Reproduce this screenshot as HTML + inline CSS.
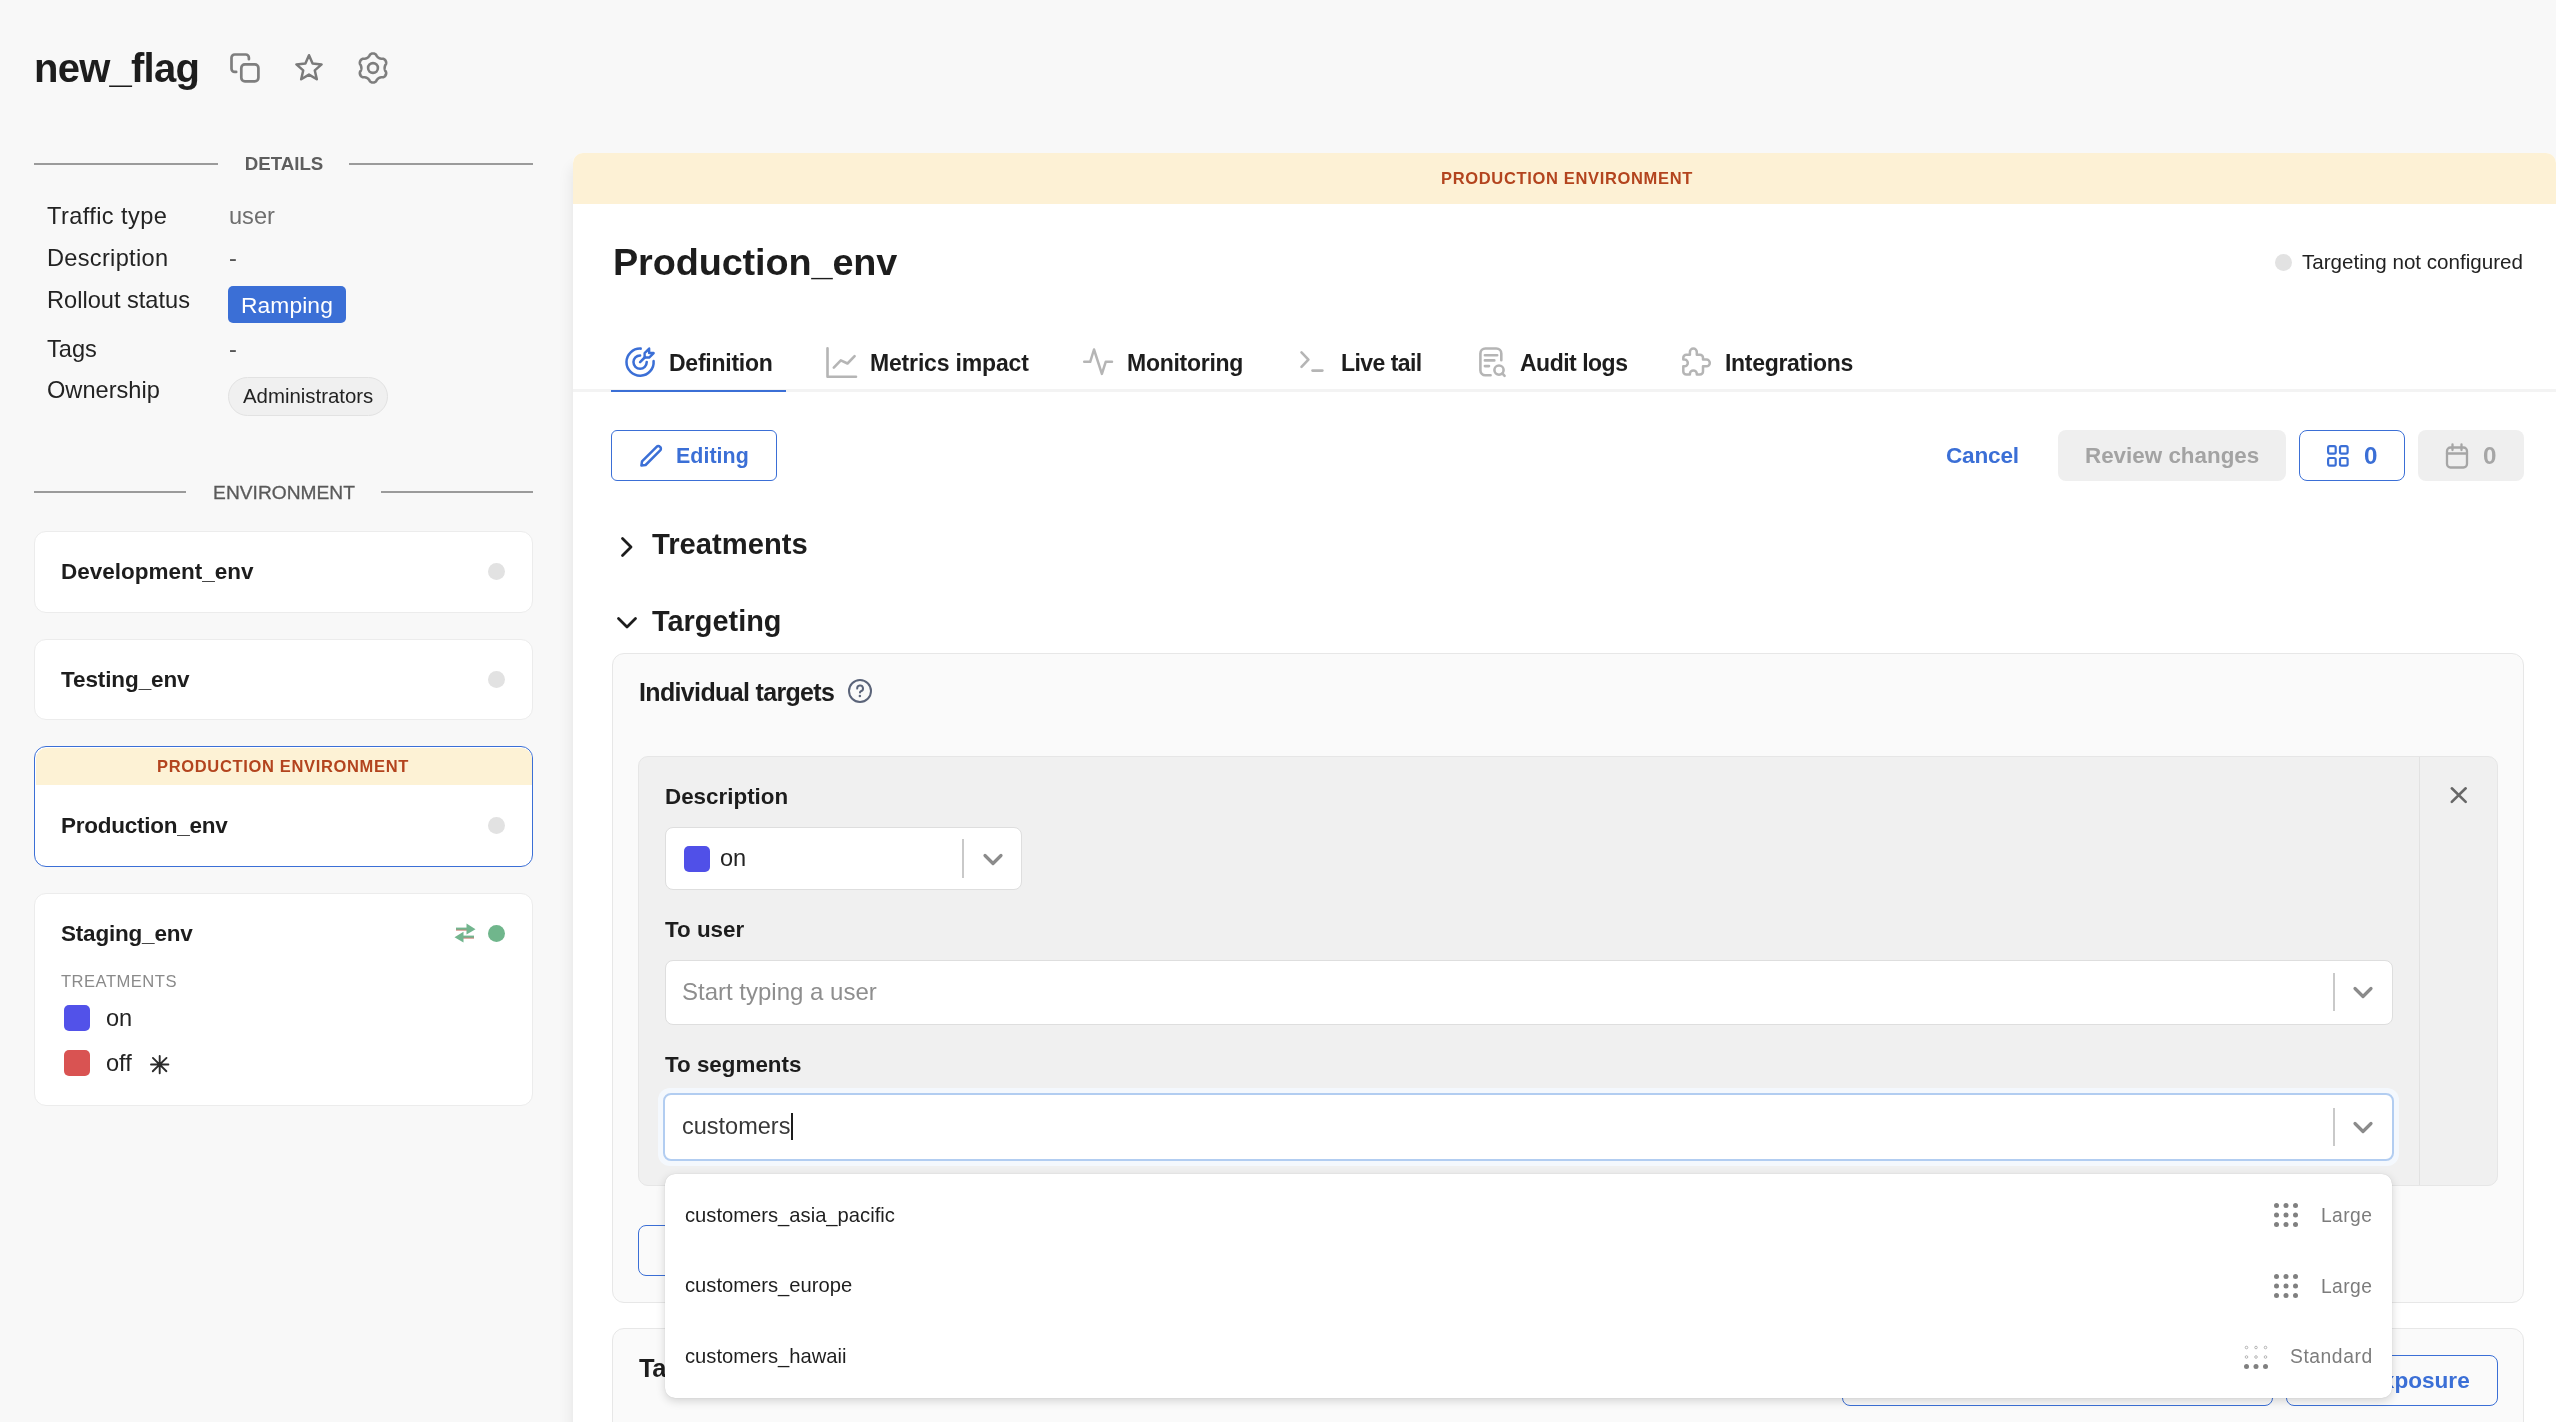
<!DOCTYPE html>
<html><head><meta charset="utf-8"><title>new_flag</title>
<style>
html,body{margin:0;padding:0;}
body{width:2556px;height:1422px;overflow:hidden;position:relative;background:#f8f8f8;font-family:"Liberation Sans",sans-serif;}
.t{position:absolute;line-height:1;white-space:nowrap;will-change:transform;}
.b{position:absolute;}
</style></head><body>
<div class="t" style="top:47.73px;font-size:40px;font-weight:700;color:#1d1d1d;letter-spacing:-0.75px;left:33.80px;">new_flag</div>
<svg class="b" style="left:226.00px;top:49.00px;width:36.00px;height:36.00px;" viewBox="0 0 36 36" fill="none"><rect x="15.3" y="15.3" width="17.1" height="17" rx="3.6" stroke="#7e7e7e" stroke-width="2.7"/><path d="M10.2 22.9 H8.7 A3.2 3.2 0 0 1 5.5 19.7 V8.7 A3.2 3.2 0 0 1 8.7 5.5 H19.7 A3.2 3.2 0 0 1 22.9 8.7 V10.2" stroke="#7e7e7e" stroke-width="2.7" stroke-linecap="round"/></svg>
<svg class="b" style="left:293.00px;top:52.00px;width:32.00px;height:32.00px;" viewBox="0 0 32 32" fill="none"><path d="M16 3.2 L19.6 11.6 L28.6 12.4 L21.8 18.4 L23.8 27.3 L16 22.6 L8.2 27.3 L10.2 18.4 L3.4 12.4 L12.4 11.6 Z" stroke="#7a7a7a" stroke-width="2.5" stroke-linejoin="round"/></svg>
<svg class="b" style="left:355.90px;top:50.80px;width:34.00px;height:34.00px;" viewBox="0 0 34 34" fill="none"><path d="M28.65 17.00 L28.66 16.69 L28.68 16.39 L28.73 16.08 L28.79 15.76 L28.86 15.44 L28.95 15.11 L29.06 14.76 L29.19 14.41 L29.35 14.03 L29.65 13.61 L29.94 13.17 L30.06 12.75 L30.14 12.35 L30.16 11.95 L30.15 11.55 L30.11 11.16 L30.03 10.78 L29.92 10.42 L29.78 10.06 L29.60 9.73 L29.40 9.40 L29.16 9.10 L28.90 8.82 L28.61 8.57 L28.30 8.33 L27.96 8.13 L27.60 7.95 L27.21 7.81 L26.79 7.71 L26.26 7.74 L25.75 7.78 L25.34 7.74 L24.97 7.67 L24.62 7.60 L24.28 7.51 L23.97 7.41 L23.66 7.31 L23.37 7.19 L23.09 7.06 L22.83 6.91 L22.56 6.75 L22.31 6.58 L22.06 6.38 L21.82 6.17 L21.58 5.95 L21.34 5.70 L21.09 5.44 L20.85 5.15 L20.61 4.82 L20.39 4.35 L20.15 3.88 L19.86 3.56 L19.54 3.30 L19.21 3.07 L18.86 2.88 L18.50 2.73 L18.13 2.61 L17.76 2.52 L17.38 2.47 L17.00 2.45 L16.62 2.47 L16.24 2.52 L15.87 2.61 L15.50 2.73 L15.14 2.88 L14.79 3.07 L14.46 3.30 L14.14 3.56 L13.85 3.88 L13.61 4.35 L13.39 4.82 L13.15 5.15 L12.91 5.44 L12.66 5.70 L12.42 5.95 L12.18 6.17 L11.94 6.38 L11.69 6.58 L11.44 6.75 L11.18 6.91 L10.91 7.06 L10.63 7.19 L10.34 7.31 L10.03 7.41 L9.72 7.51 L9.38 7.60 L9.03 7.67 L8.66 7.74 L8.25 7.78 L7.74 7.74 L7.21 7.71 L6.79 7.81 L6.40 7.95 L6.04 8.13 L5.70 8.33 L5.39 8.57 L5.10 8.82 L4.84 9.10 L4.60 9.40 L4.40 9.73 L4.22 10.06 L4.08 10.42 L3.97 10.78 L3.89 11.16 L3.85 11.55 L3.84 11.95 L3.86 12.35 L3.94 12.75 L4.06 13.17 L4.35 13.61 L4.65 14.03 L4.81 14.41 L4.94 14.76 L5.05 15.11 L5.14 15.44 L5.21 15.76 L5.27 16.08 L5.32 16.39 L5.34 16.69 L5.35 17.00 L5.34 17.31 L5.32 17.61 L5.27 17.92 L5.21 18.24 L5.14 18.56 L5.05 18.89 L4.94 19.24 L4.81 19.59 L4.65 19.97 L4.35 20.39 L4.06 20.83 L3.94 21.25 L3.86 21.65 L3.84 22.05 L3.85 22.45 L3.89 22.84 L3.97 23.22 L4.08 23.58 L4.22 23.94 L4.40 24.27 L4.60 24.60 L4.84 24.90 L5.10 25.18 L5.39 25.43 L5.70 25.67 L6.04 25.87 L6.40 26.05 L6.79 26.19 L7.21 26.29 L7.74 26.26 L8.25 26.22 L8.66 26.26 L9.03 26.33 L9.38 26.40 L9.72 26.49 L10.03 26.59 L10.34 26.69 L10.63 26.81 L10.91 26.94 L11.17 27.09 L11.44 27.25 L11.69 27.42 L11.94 27.62 L12.18 27.83 L12.42 28.05 L12.66 28.30 L12.91 28.56 L13.15 28.85 L13.39 29.18 L13.61 29.65 L13.85 30.12 L14.14 30.44 L14.46 30.70 L14.79 30.93 L15.14 31.12 L15.50 31.27 L15.87 31.39 L16.24 31.48 L16.62 31.53 L17.00 31.55 L17.38 31.53 L17.76 31.48 L18.13 31.39 L18.50 31.27 L18.86 31.12 L19.21 30.93 L19.54 30.70 L19.86 30.44 L20.15 30.12 L20.39 29.65 L20.61 29.18 L20.85 28.85 L21.09 28.56 L21.34 28.30 L21.58 28.05 L21.82 27.83 L22.06 27.62 L22.31 27.42 L22.56 27.25 L22.83 27.09 L23.09 26.94 L23.37 26.81 L23.66 26.69 L23.97 26.59 L24.28 26.49 L24.62 26.40 L24.97 26.33 L25.34 26.26 L25.75 26.22 L26.26 26.26 L26.79 26.29 L27.21 26.19 L27.60 26.05 L27.96 25.87 L28.30 25.67 L28.61 25.43 L28.90 25.18 L29.16 24.90 L29.40 24.60 L29.60 24.27 L29.78 23.94 L29.92 23.58 L30.03 23.22 L30.11 22.84 L30.15 22.45 L30.16 22.05 L30.14 21.65 L30.06 21.25 L29.94 20.83 L29.65 20.39 L29.35 19.97 L29.19 19.59 L29.06 19.24 L28.95 18.89 L28.86 18.56 L28.79 18.24 L28.73 17.92 L28.68 17.61 L28.66 17.31 L28.65 17.00Z" stroke="#7e7e7e" stroke-width="2.6" stroke-linejoin="round"/><circle cx="17" cy="17" r="4.9" stroke="#7e7e7e" stroke-width="2.6"/></svg>
<div class="b" style="left:34.00px;top:163.00px;width:184.00px;height:2.00px;background:#9b9b9b;"></div>
<div class="b" style="left:349.00px;top:163.00px;width:184.00px;height:2.00px;background:#9b9b9b;"></div>
<div class="t" style="top:155.47px;font-size:18.7px;font-weight:700;color:#5e5e5e;left:-716.50px;width:2000px;text-align:center;">DETAILS</div>
<div class="t" style="top:205.12px;font-size:23.6px;font-weight:400;color:#232323;letter-spacing:0.4px;left:46.60px;">Traffic type</div>
<div class="t" style="top:205.12px;font-size:23.6px;font-weight:400;color:#6e6e6e;left:228.70px;">user</div>
<div class="t" style="top:247.42px;font-size:23.6px;font-weight:400;color:#232323;letter-spacing:0.3px;left:47.20px;">Description</div>
<div class="t" style="top:247.42px;font-size:23.6px;font-weight:400;color:#555;left:228.60px;">-</div>
<div class="t" style="top:289.02px;font-size:23.6px;font-weight:400;color:#232323;left:47.20px;">Rollout status</div>
<div class="b" style="left:228.00px;top:286.00px;width:118.00px;height:37.00px;background:#3b6fd6;border-radius:5px;"></div>
<div class="t" style="top:294.00px;font-size:22.8px;font-weight:400;color:#fff;letter-spacing:0.1px;left:240.80px;">Ramping</div>
<div class="t" style="top:337.62px;font-size:23.6px;font-weight:400;color:#232323;left:47.00px;">Tags</div>
<div class="t" style="top:337.62px;font-size:23.6px;font-weight:400;color:#555;left:228.60px;">-</div>
<div class="t" style="top:379.42px;font-size:23.6px;font-weight:400;color:#232323;left:46.50px;">Ownership</div>
<div class="b" style="left:228.00px;top:377.00px;width:160.00px;height:39.00px;background:#f0f0f0;border:1.5px solid #e2e2e2;border-radius:20px;box-sizing:border-box;"></div>
<div class="t" style="top:385.73px;font-size:20.4px;font-weight:400;color:#232323;left:243.00px;">Administrators</div>
<div class="b" style="left:34.00px;top:491.00px;width:152.00px;height:2.00px;background:#9b9b9b;"></div>
<div class="b" style="left:381.00px;top:491.00px;width:152.00px;height:2.00px;background:#9b9b9b;"></div>
<div class="t" style="top:482.94px;font-size:19.2px;font-weight:400;color:#5a5a5a;left:-716.50px;width:2000px;text-align:center;-webkit-text-stroke:0.3px #5a5a5a;">ENVIRONMENT</div>
<div class="b" style="left:34.00px;top:530.50px;width:499.00px;height:82.00px;background:#fff;border:1.5px solid #ececec;border-radius:12px;box-sizing:border-box;"></div>
<div class="t" style="top:561.25px;font-size:22.5px;font-weight:700;color:#1d1d1d;left:60.60px;">Development_env</div>
<div class="b" style="left:488.10px;top:563.30px;width:17.00px;height:17.00px;background:#e2e2e2;border-radius:50%;"></div>
<div class="b" style="left:34.00px;top:638.50px;width:499.00px;height:81.00px;background:#fff;border:1.5px solid #ececec;border-radius:12px;box-sizing:border-box;"></div>
<div class="t" style="top:668.95px;font-size:22.5px;font-weight:700;color:#1d1d1d;letter-spacing:-0.1px;left:61.20px;">Testing_env</div>
<div class="b" style="left:488.10px;top:671.00px;width:17.00px;height:17.00px;background:#e2e2e2;border-radius:50%;"></div>
<div class="b" style="left:34.00px;top:746.00px;width:499.00px;height:121.00px;background:#fff;border:1.5px solid #3b6fd6;border-radius:12px;box-sizing:border-box;overflow:hidden;"></div>
<div class="b" style="left:35.50px;top:747.50px;width:496.00px;height:37.50px;background:#fdf2d5;border-radius:11px 11px 0 0;"></div>
<div class="t" style="top:758.33px;font-size:16.5px;font-weight:700;color:#b3441e;letter-spacing:0.66px;left:-716.70px;width:2000px;text-align:center;">PRODUCTION ENVIRONMENT</div>
<div class="t" style="top:814.95px;font-size:22.5px;font-weight:700;color:#1d1d1d;letter-spacing:-0.25px;left:60.50px;">Production_env</div>
<div class="b" style="left:488.10px;top:817.00px;width:17.00px;height:17.00px;background:#e2e2e2;border-radius:50%;"></div>
<div class="b" style="left:34.00px;top:892.50px;width:499.00px;height:213.00px;background:#fff;border:1.5px solid #ececec;border-radius:12px;box-sizing:border-box;"></div>
<div class="t" style="top:923.25px;font-size:22.5px;font-weight:700;color:#1d1d1d;letter-spacing:-0.2px;left:61.00px;">Staging_env</div>
<svg class="b" style="left:453.00px;top:922.00px;width:24.00px;height:22.00px;" viewBox="0 0 24 22" fill="none"><rect x="3" y="5.6" width="11" height="2.6" fill="#72b58e"/><rect x="3" y="7.7" width="11" height="0.8" fill="#d9706a"/><path d="M13.5 1.5 L22.5 7.2 L13.5 12.5 Z" fill="#72b58e"/><rect x="10" y="13.6" width="11" height="2.6" fill="#72b58e"/><rect x="10" y="15.7" width="11" height="0.8" fill="#d9706a"/><path d="M10.5 9.8 L1.5 15.2 L10.5 20.5 Z" fill="#72b58e"/></svg>
<div class="b" style="left:487.85px;top:924.75px;width:17.50px;height:17.50px;background:#70b68c;border-radius:50%;"></div>
<div class="t" style="top:974.14px;font-size:16.6px;font-weight:400;color:#8a8a8a;letter-spacing:0.47px;left:61.20px;">TREATMENTS</div>
<div class="b" style="left:63.70px;top:1004.70px;width:26.50px;height:26.60px;background:#5252e9;border-radius:5px;"></div>
<div class="t" style="top:1006.82px;font-size:23.6px;font-weight:400;color:#232323;left:106.20px;">on</div>
<div class="b" style="left:63.70px;top:1049.70px;width:26.50px;height:26.50px;background:#d95352;border-radius:5px;"></div>
<div class="t" style="top:1052.32px;font-size:23.6px;font-weight:400;color:#232323;left:106.20px;">off</div>
<svg class="b" style="left:149.00px;top:1054.00px;width:22.00px;height:22.00px;" viewBox="0 0 22 22" fill="none"><path d="M10.7 1.9 V19.2 M2.0 10.5 H19.4 M3.9 3.9 L17.4 17.2 M17.5 3.9 L3.8 17.3" stroke="#2b2b2b" stroke-width="1.9" stroke-linecap="round"/></svg>
<div class="b" style="left:572.50px;top:153.00px;width:1983.50px;height:1347.00px;background:#fff;border-radius:10px 10px 0 0;box-shadow:-5px 10px 14px -3px rgba(0,0,0,0.075);"></div>
<div class="b" style="left:572.50px;top:153.00px;width:1983.50px;height:51.00px;background:#fdf1d5;border-radius:10px 10px 0 0;"></div>
<div class="t" style="top:170.03px;font-size:16.5px;font-weight:700;color:#b3441e;letter-spacing:0.66px;left:567.00px;width:2000px;text-align:center;">PRODUCTION ENVIRONMENT</div>
<div class="t" style="top:244.19px;font-size:37.8px;font-weight:700;color:#1d1d1d;letter-spacing:-0.1px;left:612.50px;">Production_env</div>
<div class="b" style="left:2275.00px;top:254.00px;width:17.00px;height:17.00px;background:#e2e2e2;border-radius:50%;"></div>
<div class="t" style="top:251.56px;font-size:20.6px;font-weight:400;color:#222;right:33.00px;">Targeting not configured</div>
<div class="b" style="left:572.50px;top:389.00px;width:1983.50px;height:2.50px;background:#f3f3f3;"></div>
<div class="b" style="left:610.80px;top:390.00px;width:175.20px;height:2.00px;background:#3b6fd6;"></div>
<div class="t" style="top:351.93px;font-size:23.0px;font-weight:700;color:#1d1d1d;letter-spacing:-0.25px;left:668.80px;">Definition</div>
<div class="t" style="top:351.93px;font-size:23.0px;font-weight:700;color:#1d1d1d;letter-spacing:-0.17px;left:869.80px;">Metrics impact</div>
<div class="t" style="top:351.93px;font-size:23.0px;font-weight:700;color:#1d1d1d;letter-spacing:-0.27px;left:1127.20px;">Monitoring</div>
<div class="t" style="top:351.93px;font-size:23.0px;font-weight:700;color:#1d1d1d;letter-spacing:-0.55px;left:1340.60px;">Live tail</div>
<div class="t" style="top:351.93px;font-size:23.0px;font-weight:700;color:#1d1d1d;letter-spacing:-0.5px;left:1520.00px;">Audit logs</div>
<div class="t" style="top:351.93px;font-size:23.0px;font-weight:700;color:#1d1d1d;letter-spacing:-0.3px;left:1724.80px;">Integrations</div>
<svg class="b" style="left:622.10px;top:343.70px;width:36.20px;height:36.20px;" viewBox="0 0 24 24" fill="none"><path d="M12.4 3.06 A9 9 0 1 0 20.94 11.3" stroke="#3b6fd6" stroke-width="1.68" stroke-linecap="round"/><path d="M12 7.6 A4.4 4.4 0 1 0 16.4 12" stroke="#3b6fd6" stroke-width="1.68" stroke-linecap="round"/><path d="M15.2 8.8 L12 12" stroke="#3b6fd6" stroke-width="1.68" stroke-linecap="round"/><path d="M15 6 V9 H18 L21 6 H18 V3 Z" stroke="#3b6fd6" stroke-width="1.6" stroke-linejoin="round"/></svg>
<svg class="b" style="left:822.00px;top:344.00px;width:40.00px;height:36.00px;" viewBox="0 0 40 36" fill="none"><path d="M5.5 4.2 V32.8 H34" stroke="#b5b5b5" stroke-width="2.6" stroke-linecap="round" stroke-linejoin="round"/><path d="M11.8 23.6 L18.8 16.3 L25.5 19.5 L32.6 12.2" stroke="#b5b5b5" stroke-width="2.6" stroke-linecap="round" stroke-linejoin="round"/></svg>
<svg class="b" style="left:1080.00px;top:345.00px;width:34.00px;height:32.00px;" viewBox="0 0 34 32" fill="none"><path d="M4.2 16.8 H10.2 L14 4.5 L21.9 28.9 L25.7 16.8 H32" stroke="#b5b5b5" stroke-width="2.5" stroke-linecap="round" stroke-linejoin="round"/></svg>
<svg class="b" style="left:1298.00px;top:349.00px;width:29.00px;height:26.00px;" viewBox="0 0 29 26" fill="none"><path d="M3.5 3.4 L10.4 10.6 L3.5 17.8" stroke="#b5b5b5" stroke-width="2.6" stroke-linecap="round" stroke-linejoin="round"/><path d="M14.5 21.6 H24.4" stroke="#b5b5b5" stroke-width="2.6" stroke-linecap="round"/></svg>
<svg class="b" style="left:1476.00px;top:343.00px;width:32.00px;height:36.00px;" viewBox="0 0 32 36" fill="none"><path d="M14.6 32.3 H9.4 A5 5 0 0 1 4.4 27.3 V10.5 A5 5 0 0 1 9.4 5.5 H20.3 A5 5 0 0 1 25.3 10.5 V17.3" stroke="#b5b5b5" stroke-width="2.6" stroke-linecap="round"/><path d="M8.9 12.3 H21.2 M8.9 17.4 H18.3 M8.9 23.1 H13" stroke="#b5b5b5" stroke-width="2.6" stroke-linecap="round"/><circle cx="23" cy="27.1" r="4.6" stroke="#b5b5b5" stroke-width="2.6"/><path d="M26.3 30.4 L28.6 32.8" stroke="#b5b5b5" stroke-width="2.6" stroke-linecap="round"/></svg>
<svg class="b" style="left:1676.00px;top:342.00px;width:36.00px;height:36.00px;" viewBox="0 0 36 36" fill="none"><path d="M10.3 12.8 H13.9 V9.95 A3.45 3.45 0 0 1 20.8 9.95 V12.8 H24 A3 3 0 0 1 27 15.8 V17.6 H30.45 A3.35 3.35 0 0 1 30.45 24.3 H27 V29.6 A3 3 0 0 1 24 32.6 H20.8 V31.85 A3.45 3.45 0 0 0 13.9 31.85 V32.6 H10.3 A3 3 0 0 1 7.3 29.6 V24.3 H8.45 A3.35 3.35 0 0 0 8.45 17.6 H7.3 V15.8 A3 3 0 0 1 10.3 12.8 Z" stroke="#b5b5b5" stroke-width="2.5" stroke-linejoin="round"/></svg>
<div class="b" style="left:611.00px;top:430.00px;width:166.00px;height:51.00px;border:1.3px solid #3b6fd6;border-radius:6px;box-sizing:border-box;"></div>
<svg class="b" style="left:637.00px;top:442.00px;width:28.00px;height:28.00px;" viewBox="0 0 28 28" fill="none"><path d="M4.4 23.6 L5 19.4 L19.6 4.8 A2.4 2.4 0 0 1 23 4.8 L23.2 5 A2.4 2.4 0 0 1 23.2 8.4 L8.6 23 Z" stroke="#3b6fd6" stroke-width="2.5" stroke-linejoin="round"/></svg>
<div class="t" style="top:445.68px;font-size:21.4px;font-weight:700;color:#3b6fd6;letter-spacing:0.05px;left:676.20px;">Editing</div>
<div class="t" style="top:445.26px;font-size:22.6px;font-weight:700;color:#3b6fd6;letter-spacing:-0.2px;left:1945.50px;">Cancel</div>
<div class="b" style="left:2058.00px;top:430.00px;width:228.00px;height:51.00px;background:#efefef;border-radius:8px;"></div>
<div class="t" style="top:445.43px;font-size:22.4px;font-weight:700;color:#a3a3a3;left:2085.00px;">Review changes</div>
<div class="b" style="left:2299.00px;top:430.00px;width:106.00px;height:51.00px;border:1.3px solid #3b6fd6;border-radius:8px;box-sizing:border-box;"></div>
<svg class="b" style="left:2325.00px;top:443.00px;width:26.00px;height:26.00px;" viewBox="0 0 26 26" fill="none"><rect x="3.1" y="3.1" width="7.6" height="7.6" rx="1.6" stroke="#3b6fd6" stroke-width="2.2"/><rect x="3.1" y="15.0" width="7.6" height="7.6" rx="1.6" stroke="#3b6fd6" stroke-width="2.2"/><rect x="15.0" y="3.1" width="7.6" height="7.6" rx="1.6" stroke="#3b6fd6" stroke-width="2.2"/><rect x="15.0" y="15.0" width="7.6" height="7.6" rx="1.6" stroke="#3b6fd6" stroke-width="2.2"/></svg>
<div class="t" style="top:444.11px;font-size:24.2px;font-weight:700;color:#3b6fd6;left:2364.00px;">0</div>
<div class="b" style="left:2418.00px;top:430.00px;width:106.00px;height:51.00px;background:#efefef;border-radius:8px;"></div>
<svg class="b" style="left:2444.00px;top:442.00px;width:26.00px;height:28.00px;" viewBox="0 0 26 28" fill="none"><rect x="3" y="5.5" width="20" height="20" rx="3.5" stroke="#a6a6a6" stroke-width="2.3"/><path d="M3 11.5 H23 M8.5 2.5 V8 M17.5 2.5 V8" stroke="#a6a6a6" stroke-width="2.3" stroke-linecap="round"/></svg>
<div class="t" style="top:444.11px;font-size:24.2px;font-weight:700;color:#a6a6a6;left:2482.60px;">0</div>
<svg class="b" style="left:618.00px;top:535.00px;width:18.00px;height:24.00px;" viewBox="0 0 18 24" fill="none"><path d="M4.5 3.5 L13 12 L4.5 20.5" stroke="#1d1d1d" stroke-width="2.8" stroke-linecap="round" stroke-linejoin="round"/></svg>
<div class="t" style="top:530.28px;font-size:29.2px;font-weight:700;color:#1d1d1d;left:651.70px;">Treatments</div>
<svg class="b" style="left:614.00px;top:612.00px;width:26.00px;height:22.00px;" viewBox="0 0 26 22" fill="none"><path d="M4.5 6.5 L13 15 L21.5 6.5" stroke="#1d1d1d" stroke-width="2.8" stroke-linecap="round" stroke-linejoin="round"/></svg>
<div class="t" style="top:606.63px;font-size:28.9px;font-weight:700;color:#1d1d1d;left:651.70px;">Targeting</div>
<div class="b" style="left:611.50px;top:652.50px;width:1912.50px;height:650.50px;background:#fafafa;border:1.5px solid #e7e7e7;border-radius:12px;box-sizing:border-box;"></div>
<div class="t" style="top:679.63px;font-size:25.0px;font-weight:700;color:#1d1d1d;letter-spacing:-0.65px;left:638.70px;">Individual targets</div>
<svg class="b" style="left:847.00px;top:678.00px;width:26.00px;height:26.00px;" viewBox="0 0 26 26" fill="none"><circle cx="13" cy="13" r="11" stroke="#5b6479" stroke-width="2"/><path d="M10.2 10.6 A2.9 2.9 0 1 1 14 13.2 C13.4 13.6 13 13.9 13 14.6" stroke="#5b6479" stroke-width="2" stroke-linecap="round"/><circle cx="12.9" cy="17.9" r="1.25" fill="#5b6479"/></svg>
<div class="b" style="left:638.20px;top:756.00px;width:1859.80px;height:430.00px;background:#f0f0f0;border:1.5px solid #e6e6e6;border-radius:10px;box-sizing:border-box;"></div>
<div class="b" style="left:2419.00px;top:757.00px;width:1.30px;height:428.00px;background:#e2e2e2;"></div>
<svg class="b" style="left:2446.00px;top:783.00px;width:25.00px;height:24.00px;" viewBox="0 0 25 24" fill="none"><path d="M5.8 5.3 L19.7 18.9 M19.7 5.3 L5.8 18.9" stroke="#676767" stroke-width="2.6" stroke-linecap="round"/></svg>
<div class="t" style="top:786.13px;font-size:22.4px;font-weight:700;color:#1d1d1d;left:665.10px;">Description</div>
<div class="b" style="left:664.50px;top:826.50px;width:357.70px;height:63.00px;background:#fff;border:1.5px solid #dedede;border-radius:8px;box-sizing:border-box;"></div>
<div class="b" style="left:683.70px;top:845.90px;width:26.60px;height:26.30px;background:#5050e8;border-radius:5px;"></div>
<div class="t" style="top:846.92px;font-size:23.6px;font-weight:400;color:#232323;left:720.40px;">on</div>
<div class="b" style="left:962.00px;top:839.00px;width:2.00px;height:38.50px;background:#c9c9c9;"></div>
<svg class="b" style="left:980.00px;top:850.00px;width:26.00px;height:20.00px;" viewBox="0 0 26 20" fill="none"><path d="M5 5.5 L13 13.5 L21 5.5" stroke="#8b8b8b" stroke-width="3.2" stroke-linecap="round" stroke-linejoin="round"/></svg>
<div class="t" style="top:918.73px;font-size:22.4px;font-weight:700;color:#1d1d1d;left:665.10px;">To user</div>
<div class="b" style="left:664.50px;top:959.50px;width:1728.00px;height:65.00px;background:#fff;border:1.5px solid #dedede;border-radius:8px;box-sizing:border-box;"></div>
<div class="t" style="top:979.58px;font-size:24.0px;font-weight:400;color:#8e8e8e;left:682.00px;">Start typing a user</div>
<div class="b" style="left:2333.00px;top:973.00px;width:2.00px;height:38.00px;background:#c9c9c9;"></div>
<svg class="b" style="left:2350.00px;top:982.50px;width:26.00px;height:20.00px;" viewBox="0 0 26 20" fill="none"><path d="M5 5.5 L13 13.5 L21 5.5" stroke="#8b8b8b" stroke-width="3.2" stroke-linecap="round" stroke-linejoin="round"/></svg>
<div class="t" style="top:1053.93px;font-size:22.4px;font-weight:700;color:#1d1d1d;left:665.10px;">To segments</div>
<div class="b" style="left:658.00px;top:1088.00px;width:1741.00px;height:78.00px;background:#f4f8fd;border-radius:12px;"></div>
<div class="b" style="left:662.80px;top:1092.80px;width:1731.20px;height:68.20px;background:#fff;border:2px solid #b2cdf1;border-radius:8px;box-sizing:border-box;"></div>
<div class="t" style="top:1115.10px;font-size:23.5px;font-weight:400;color:#383838;left:682.10px;">customers</div>
<div class="b" style="left:791.00px;top:1113.00px;width:2.00px;height:27.00px;background:#1d1d1d;"></div>
<div class="b" style="left:2333.00px;top:1108.00px;width:2.00px;height:38.00px;background:#c9c9c9;"></div>
<svg class="b" style="left:2350.00px;top:1117.80px;width:26.00px;height:20.00px;" viewBox="0 0 26 20" fill="none"><path d="M5 5.5 L13 13.5 L21 5.5" stroke="#8b8b8b" stroke-width="3.2" stroke-linecap="round" stroke-linejoin="round"/></svg>
<div class="b" style="left:638.30px;top:1225.00px;width:561.70px;height:51.00px;border:1.3px solid #3b6fd6;border-radius:8px;box-sizing:border-box;"></div>
<div class="b" style="left:611.50px;top:1328.30px;width:1912.50px;height:171.70px;background:#fafafa;border:1.5px solid #e7e7e7;border-radius:12px;box-sizing:border-box;"></div>
<div class="t" style="top:1355.81px;font-size:25.5px;font-weight:700;color:#1d1d1d;letter-spacing:-0.5px;left:638.60px;">Targeting rules</div>
<div class="b" style="left:1842.00px;top:1355.00px;width:430.50px;height:50.50px;border:1.3px solid #3b6fd6;border-radius:8px;box-sizing:border-box;"></div>
<div class="b" style="left:2286.00px;top:1355.00px;width:212.00px;height:50.50px;border:1.3px solid #3b6fd6;border-radius:8px;box-sizing:border-box;"></div>
<div class="t" style="top:1369.86px;font-size:22.6px;font-weight:700;color:#3b6fd6;right:86.00px;">Limit exposure</div>
<div class="b" style="left:664.50px;top:1173.50px;width:1727.80px;height:224.20px;background:#fff;border-radius:10px;box-shadow:0 3px 10px rgba(0,0,0,0.16),0 0 1px rgba(0,0,0,0.2);"></div>
<div class="t" style="top:1204.90px;font-size:20.2px;font-weight:400;color:#1f1f1f;left:684.90px;">customers_asia_pacific</div>
<div class="t" style="top:1275.20px;font-size:20.2px;font-weight:400;color:#1f1f1f;left:684.90px;">customers_europe</div>
<div class="t" style="top:1345.90px;font-size:20.2px;font-weight:400;color:#1f1f1f;left:684.90px;">customers_hawaii</div>
<svg class="b" style="left:2274.00px;top:1203.20px;width:24.00px;height:24.00px;" viewBox="0 0 24 24" fill="none"><circle cx="2.5" cy="2.5" r="2.5" fill="#808080"/><circle cx="12.0" cy="2.5" r="2.5" fill="#808080"/><circle cx="21.5" cy="2.5" r="2.5" fill="#808080"/><circle cx="2.5" cy="12.0" r="2.5" fill="#808080"/><circle cx="12.0" cy="12.0" r="2.5" fill="#808080"/><circle cx="21.5" cy="12.0" r="2.5" fill="#808080"/><circle cx="2.5" cy="21.5" r="2.5" fill="#808080"/><circle cx="12.0" cy="21.5" r="2.5" fill="#808080"/><circle cx="21.5" cy="21.5" r="2.5" fill="#808080"/></svg>
<div class="t" style="top:1206.26px;font-size:19.3px;font-weight:400;color:#7c7c7c;letter-spacing:0.4px;right:183.60px;margin-right:-0.4px;">Large</div>
<svg class="b" style="left:2274.00px;top:1274.00px;width:24.00px;height:24.00px;" viewBox="0 0 24 24" fill="none"><circle cx="2.5" cy="2.5" r="2.5" fill="#808080"/><circle cx="12.0" cy="2.5" r="2.5" fill="#808080"/><circle cx="21.5" cy="2.5" r="2.5" fill="#808080"/><circle cx="2.5" cy="12.0" r="2.5" fill="#808080"/><circle cx="12.0" cy="12.0" r="2.5" fill="#808080"/><circle cx="21.5" cy="12.0" r="2.5" fill="#808080"/><circle cx="2.5" cy="21.5" r="2.5" fill="#808080"/><circle cx="12.0" cy="21.5" r="2.5" fill="#808080"/><circle cx="21.5" cy="21.5" r="2.5" fill="#808080"/></svg>
<div class="t" style="top:1276.66px;font-size:19.3px;font-weight:400;color:#7c7c7c;letter-spacing:0.4px;right:183.60px;margin-right:-0.4px;">Large</div>
<svg class="b" style="left:2244.00px;top:1345.00px;width:24.00px;height:24.00px;" viewBox="0 0 24 24" fill="none"><circle cx="2.5" cy="2.5" r="1.3" stroke="#9a9a9a" stroke-width="0.7"/><circle cx="12.0" cy="2.5" r="1.3" stroke="#9a9a9a" stroke-width="0.7"/><circle cx="21.5" cy="2.5" r="1.3" stroke="#9a9a9a" stroke-width="0.7"/><circle cx="2.5" cy="12.0" r="1.3" stroke="#9a9a9a" stroke-width="0.7"/><circle cx="12.0" cy="12.0" r="1.3" stroke="#9a9a9a" stroke-width="0.7"/><circle cx="21.5" cy="12.0" r="1.3" stroke="#9a9a9a" stroke-width="0.7"/><circle cx="2.5" cy="21.5" r="2.5" fill="#808080"/><circle cx="12.0" cy="21.5" r="2.5" fill="#808080"/><circle cx="21.5" cy="21.5" r="2.5" fill="#808080"/></svg>
<div class="t" style="top:1347.26px;font-size:19.3px;font-weight:400;color:#7c7c7c;letter-spacing:0.55px;right:183.60px;margin-right:-0.55px;">Standard</div>
</body></html>
